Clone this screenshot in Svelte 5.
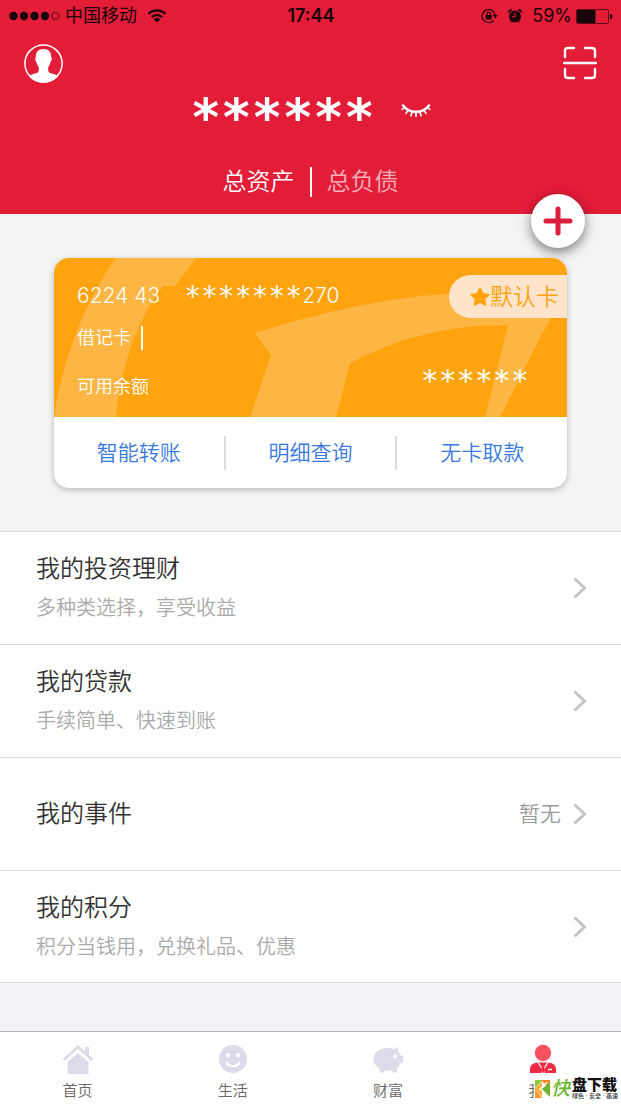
<script lang="ts">
  interface MenuItem {
    title: string;
    desc?: string;
    value?: string;
  }

  const menu: MenuItem[] = [
    { title: '我的投资理财', desc: '多种类选择，享受收益' },
    { title: '我的贷款', desc: '手续简单、快速到账' },
    { title: '我的事件', value: '暂无' },
    { title: '我的积分', desc: '积分当钱用，兑换礼品、优惠' },
  ];

  const cardActions = ['智能转账', '明细查询', '无卡取款'];

  const tabs = [
    { id: 'home', label: '首页' },
    { id: 'life', label: '生活' },
    { id: 'wealth', label: '财富' },
    { id: 'mine', label: '我的' },
  ];

  let view = $state('assets');
</script>

<div class="page">
  <header>
    <div class="status">
      <div class="carrier">
        <svg width="51" height="10" viewBox="0 0 51 10">
          <circle cx="4.5" cy="5" r="4.2" />
          <circle cx="15" cy="5" r="4.2" />
          <circle cx="25.5" cy="5" r="4.2" />
          <circle cx="36" cy="5" r="4.2" />
          <circle cx="46.5" cy="5" r="3.7" fill="none" stroke="#5c0c18" />
        </svg>
        <span>中国移动</span>
        <svg class="wifi" width="20" height="14" viewBox="0 0 20 14">
          <path d="M1.5 4.8a12.4 12.4 0 0 1 17 0M4.8 8.2a7.6 7.6 0 0 1 10.4 0" fill="none" stroke="#18040a" stroke-width="2.2" />
          <path d="M10 13.6L6.7 10.3a4.8 4.8 0 0 1 6.6 0z" />
        </svg>
      </div>
      <time>17:44</time>
      <div class="indicators">
        <svg width="17" height="16" viewBox="0 0 17 16">
          <path d="M12.6 12.6A6.6 6.6 0 1 1 14.3 7.5" fill="none" stroke="#18040a" stroke-width="1.2" />
          <path d="M11.8 7h4.9l-2.4 3.6z" />
          <rect x="4.7" y="7" width="6" height="4.6" rx=".5" />
          <path d="M5.9 7V5.8a1.8 1.8 0 0 1 3.6 0V7" fill="none" stroke="#18040a" stroke-width="1.1" />
        </svg>
        <svg width="16" height="16" viewBox="0 0 16 16">
          <circle cx="8" cy="8.6" r="6" />
          <path d="M1.5 4.5a2.5 2.5 0 0 1 3.3-2.7zM14.5 4.5a2.5 2.5 0 0 0-3.3-2.7zM3.5 14.5l1.5-2M12.5 14.5l-1.5-2" stroke="#18040a" />
          <path d="M8 4.8v4H5" fill="none" stroke="#e31c38" stroke-width="1.1" />
        </svg>
        <span>59%</span>
        <svg width="37" height="15" viewBox="0 0 37 15">
          <rect x=".5" y=".5" width="32" height="14" rx="1.5" fill="none" stroke="#5c0c18" />
          <rect x="1" y="1" width="18.5" height="13" rx="1" />
          <path d="M34 5a2.4 2.4 0 0 1 0 5z" />
        </svg>
      </div>
    </div>

    <div class="toolbar">
      <button aria-label="个人中心">
        <svg width="39" height="39" viewBox="0 0 39 39">
          <circle cx="19.5" cy="19.5" r="18.6" fill="none" stroke="#fff" stroke-width="1.5" />
          <path d="M19.5 5c5 0 8 3 7.7 8.4.9.5.8 2.8-.6 4.7-.6 2.6-1.5 4-2.4 5.2-.2 3 .2 4.8 1.4 5.4 3.2 1.3 6.4 1.7 8.4 3.3A18.6 18.6 0 0 1 5 32c2-1.6 5.2-2 8.4-3.3 1.2-.6 1.6-2.4 1.4-5.4-.9-1.2-1.8-2.6-2.4-5.2-1.4-1.9-1.5-4.2-.6-4.700C11.500 8 14.500 5 19.500 5z" fill="#fff" />
        </svg>
      </button>
      <button aria-label="扫一扫">
        <svg width="34" height="34" viewBox="0 0 34 34" fill="none" stroke="#fff" stroke-width="2.4" stroke-linecap="round">
          <path d="M2 11V5q0-3 3-3h6M22 2h7q3 0 3 3v6M2 23v6q0 3 3 3h6M22 32h7q3 0 3-3v-6M1 17h32" />
        </svg>
      </button>
    </div>

    <div class="balance">
      <span class="mask">******</span>
      <button aria-label="显示金额">
        <svg width="30" height="15" viewBox="0 0 30 15" fill="none" stroke="#fff" stroke-linecap="round">
          <path d="M2 2.5C8 11 22 11 28 2.5" stroke-width="2.6" />
          <path d="M3.5 4.5L1 6.5M7 7.5L5 10.3M11 9l-1 3.7M15 9.5v4M19 9l1 3.7M23 7.5l2 2.8M26.5 4.5L29 6.5" stroke-width="1.6" />
        </svg>
      </button>
    </div>

    <div class="totals">
      <button class:active={view === 'assets'} onclick={() => (view = 'assets')}>总资产</button>
      <button class:active={view === 'debts'} onclick={() => (view = 'debts')}>总负债</button>
    </div>

    <button class="add" aria-label="添加">
      <svg width="30" height="30" viewBox="0 0 30 30">
        <path d="M15 3v24M3 15h24" stroke="#dc1f3e" stroke-width="5" stroke-linecap="round" />
      </svg>
    </button>
  </header>

  <main>
    <section class="card-area">
      <article class="card">
        <div class="face">
          <svg class="art" viewBox="0 0 513 159" preserveAspectRatio="none">
            <path d="M62 0C36 36 10 92 0 159H62C66 110 84 60 109 28H121L142 0z" />
            <path d="M201 75C262 56 330 39 396 36L505 34C500 52 496 64 488 76L446 159H431L454 67C390 67 346 80 296 105L282 159H196L217 97z" />
          </svg>
          <div class="number-row">
            <span class="number">6224 43</span>
            <span class="mask">*******</span>
            <span class="number">270</span>
            <span class="badge">
              <svg width="20" height="20" viewBox="0 0 20 20">
                <path d="M10 1.5l2.6 5.4 5.9.8-4.3 4.1 1.1 5.9L10 14.8l-5.3 2.9 1.1-5.9L1.5 7.7l5.9-.8z" fill="#ffa30e" stroke="#ffa30e" stroke-width="2" stroke-linejoin="round" />
              </svg>
              <span>默认卡</span>
            </span>
          </div>
          <div class="type-row"><span>借记卡</span></div>
          <div class="avail-row">
            <span>可用余额</span>
            <span class="mask">******</span>
          </div>
        </div>
        <div class="actions">
          {#each cardActions as action}
            <button>{action}</button>
          {/each}
        </div>
      </article>
    </section>

    <section class="menu">
      {#each menu as item}
        <a href="#detail">
          <div class="text">
            <h2>{item.title}</h2>
            {#if item.desc}<p>{item.desc}</p>{/if}
          </div>
          {#if item.value}<span class="value">{item.value}</span>{/if}
          <svg width="14" height="22" viewBox="0 0 14 22">
            <path d="M1.5 1.5L11.5 11l-10 9.5" fill="none" stroke="#c4c4c4" stroke-width="3" />
          </svg>
        </a>
      {/each}
    </section>
  </main>

  <nav>
    {#each tabs as tab}
      <a href="#{tab.id}">
        <svg width="32" height="32" viewBox="0 0 32 32">
          {#if tab.id === 'home'}
            <path d="M1.5 17L16 4l14.5 13" fill="none" stroke="#dddbea" stroke-width="3" />
            <path d="M23 4h4v9l-4-3.6zM5.5 19L16 10l10.5 9V31h-21z" fill="#dddbea" />
          {:else if tab.id === 'life'}
            <circle cx="16" cy="16" r="14" fill="#dddbea" />
            <circle cx="11" cy="12" r="2.2" fill="#fff" />
            <circle cx="21" cy="12" r="2.2" fill="#fff" />
            <path d="M9.5 19.5c2.5 5 10.5 5 13 0" fill="none" stroke="#fff" stroke-width="2.2" stroke-linecap="round" />
          {:else if tab.id === 'wealth'}
            <path d="M1.5 16C2 9 8 5 15 5c3 0 5.5.6 7.500 1.400L26 3.500V8.600c1.500 1.200 2.400 2.600 2.900 4.100h2.300v6.600l-2.800 1c-.7 1.900-1.700 3.300-3.400 4.600V29.500h-4.500V27.500h-8v2H7.500V25.500C4 23.500 1.500 20 1.500 16z" fill="#dddbea" />
            <circle cx="23" cy="13.5" r="1.9" fill="#fff" />
          {:else}
            <circle cx="16" cy="10" r="8.2" fill="#f7525f" />
            <path d="M3 30v-4c0-4.500 4-6 8-6.500h10c4 .5 8 2 8 6.500v4z" fill="#ee2b42" />
            <path d="M11 19.5l4 6V30M21 19.5l-4 6V30" fill="none" stroke="#fff" stroke-width="1.3" />
            <path d="M14 20h4l-1 2.5 1 5.5-2 2-2-2 1-5.5z" fill="#ee2b42" />
            <path d="M21 26.5h4" stroke="#fff" stroke-width="1.5" />
          {/if}
        </svg>
        <span>{tab.label}</span>
      </a>
    {/each}
    <div class="stamp">
      <svg width="17" height="18" viewBox="0 0 17 18">
        <path d="M1 0h8L1 8z" fill="#8cc63e" />
        <path d="M7 0h9v9z" fill="#f58220" />
        <path d="M0 9l8-7v15z" fill="#fbb03b" />
        <path d="M1 10l7 8H1z" fill="#f7931e" />
        <path d="M8 9l8-7v15z" fill="#6cb52d" />
        <path d="M13.5 2L6 9l7.5 7" fill="none" stroke="#fff" stroke-width="1.3" />
      </svg>
      <em>快</em>
      <div class="stamp-text">
        <b>盘下载</b>
        <small>绿色 · 安全 · 高速</small>
      </div>
    </div>
  </nav>
</div>

<style>
  :global(body) {
    margin: 0;
  }

  .page {
    display: flex;
    flex-direction: column;
    min-height: 100vh;
    background: #f3f3f7;
    font-family: Inter, 'Noto Sans CJK SC', sans-serif;
    font-weight: 350;
    color: #333;
  }

  button {
    padding: 0;
    border: 0;
    background: none;
    font: inherit;
    color: inherit;
    cursor: pointer;
  }

  a {
    color: inherit;
    text-decoration: none;
  }

  svg {
    display: block;
    flex: none;
  }

  .mask {
    font-family: 'DejaVu Sans Mono', monospace;
    font-weight: 400;
  }

  header {
    position: relative;
    background: #e31c38;
    color: #fff;
  }

  .status {
    display: grid;
    grid-template-columns: 1fr auto 1fr;
    align-items: center;
    height: 32px;
    padding: 0 8px 0 9px;
    font-size: 18px;
    font-weight: 400;
    line-height: 24px;
    color: #18040a;
    fill: #18040a;
  }

  .status time {
    font-weight: 600;
  }

  .carrier,
  .indicators {
    display: flex;
    align-items: center;
    gap: 5px;
  }

  .indicators {
    justify-content: flex-end;
    gap: 9px;
  }

  .indicators span {
    margin-right: -5px;
  }

  .wifi {
    margin-left: 5px;
  }

  .toolbar {
    display: flex;
    align-items: center;
    justify-content: space-between;
    height: 38px;
    padding: 12px 24px 0;
  }

  .balance {
    display: flex;
    align-items: center;
    justify-content: center;
    gap: 26px;
    height: 56px;
  }

  .balance .mask {
    padding-top: 16px;
    font-size: 51px;
    font-weight: 700;
    line-height: 32px;
  }

  .totals {
    display: flex;
    align-items: center;
    justify-content: center;
    height: 64px;
    padding-top: 12px;
    font-size: 24px;
    line-height: 30px;
  }

  .totals button {
    padding: 0 15px;
    opacity: 0.65;
  }

  .totals button.active {
    opacity: 1;
  }

  .totals button:first-child {
    border-right: 2px solid #fff;
  }

  .add {
    position: absolute;
    right: 36px;
    bottom: -34px;
    display: flex;
    align-items: center;
    justify-content: center;
    width: 54px;
    height: 54px;
    border-radius: 50%;
    background: #fff;
    box-shadow: 0 4px 12px rgba(0, 0, 0, 0.5);
  }

  .card-area {
    padding: 44px 54px 43px;
    background: #f4f4f4;
  }

  .card {
    overflow: hidden;
    border-radius: 15px;
    background: #fff;
    box-shadow: 0 2px 6px rgba(0, 0, 0, 0.25);
  }

  .face {
    position: relative;
    background: #ffa30e;
    color: #fff;
    font-size: 18px;
    line-height: 24px;
  }

  .art {
    position: absolute;
    width: 100%;
    height: 100%;
    fill: #fdb544;
  }

  .number-row,
  .type-row,
  .avail-row {
    position: relative;
    display: flex;
    align-items: center;
    padding-left: 23px;
  }

  .number-row {
    padding-top: 17px;
    height: 43px;
  }

  .number {
    padding-bottom: 2px;
    font-size: 21px;
  }

  .number-row .mask {
    margin-left: 24px;
    font-size: 28px;
    line-height: 32px;
  }

  .badge {
    display: flex;
    align-items: center;
    height: 43px;
    margin-left: auto;
    padding: 0 8px 0 21px;
    border-radius: 22px 0 0 22px;
    background: #fee4cb;
    color: #ffa30e;
    font-size: 23px;
  }

  .type-row {
    height: 40px;
  }

  .type-row span {
    padding-right: 10px;
    border-right: 2px solid #fff;
  }

  .avail-row {
    justify-content: space-between;
    height: 57px;
    padding-right: 38px;
    padding-bottom: 2px;
  }

  .avail-row .mask {
    padding-bottom: 12px;
    font-size: 30px;
    line-height: 32px;
  }

  .actions {
    display: flex;
    align-items: center;
    height: 71px;
  }

  .actions button {
    flex: 1;
    line-height: 34px;
    font-size: 21px;
    color: #3878e0;
  }

  .actions button:not(:last-child) {
    border-right: 2px solid #ddd;
  }

  .menu {
    border-top: 1px solid #dcdcdc;
    background: #fff;
  }

  .menu a {
    display: flex;
    align-items: center;
    height: 112px;
    padding: 0 34px 0 36px;
    border-bottom: 1px solid #dcdcdc;
  }

  .menu a:last-child {
    height: 111px;
  }

  .text {
    flex: 1;
  }

  h2 {
    margin: 0;
    font-size: 24px;
    font-weight: inherit;
    line-height: 34px;
  }

  p {
    margin: 6px 0 0;
    font-size: 20px;
    line-height: 32px;
    color: #aaa;
  }

  .value {
    margin-right: 12px;
    font-size: 21px;
    line-height: 24px;
    color: #999;
  }

  nav {
    position: relative;
    display: flex;
    height: 72px;
    margin-top: auto;
    border-top: 1px solid #b4b4b4;
    background: #fff;
  }

  nav a {
    display: flex;
    flex: 1;
    flex-direction: column;
    align-items: center;
    gap: 4px;
    padding-top: 11px;
    font-size: 15px;
    line-height: 24px;
    color: #666;
  }

  /* download site stamp in the corner */
  .stamp {
    position: absolute;
    right: 3px;
    bottom: 4px;
    display: flex;
    align-items: center;
    height: 22px;
    background: #fff;
  }

  .stamp em {
    font-size: 19px;
    font-weight: 500;
    line-height: 22px;
    color: #6cb52d;
  }

  .stamp-text {
    display: flex;
    flex-direction: column;
    margin-left: 2px;
  }

  .stamp b {
    font-size: 15px;
    font-weight: 900;
    line-height: 14px;
    color: #111;
  }

  .stamp small {
    font-size: 6px;
    font-weight: 500;
    line-height: 8px;
    color: #333;
    white-space: nowrap;
  }
</style>
